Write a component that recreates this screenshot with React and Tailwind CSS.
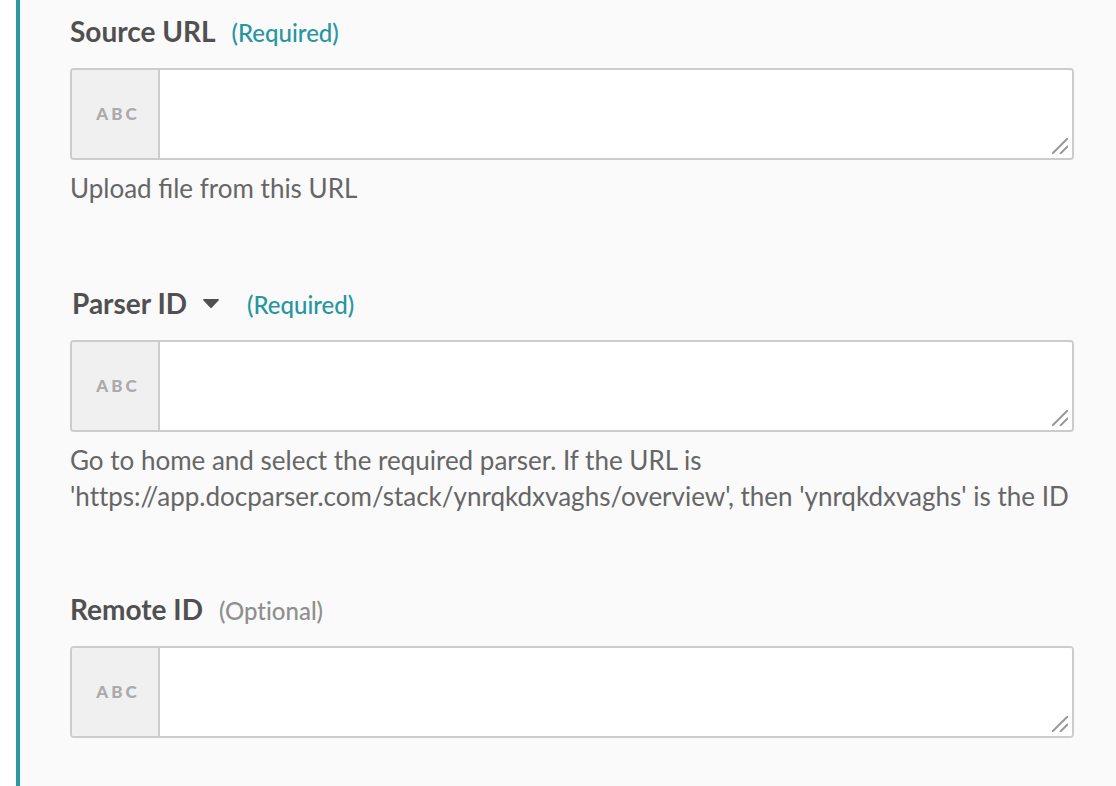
import React from "react";

function Grip() {
  return (
    <svg className="pointer-events-none absolute right-1 bottom-1 size-4" viewBox="0 0 16 16" fill="none" stroke="#999999" strokeWidth="2" aria-hidden="true">
      <path d="M0 16 16 0M8 16l8-8" />
    </svg>
  );
}

function Field({ id, heading, note, required, help }) {
  return (
    <section>
      <div className="flex items-baseline gap-4">
        {heading}
        <span className={required ? "text-2xl leading-9 font-medium text-[#26969f] [font-variant-ligatures:none]" : "text-2xl leading-9 font-medium text-[#8f8f8f] [font-variant-ligatures:none]"}>{note}</span>
      </div>
      <div className="relative mt-[17px] flex h-[92px] overflow-hidden rounded-sm border-2 border-[#cccccc] bg-white">
        <span className="flex w-[88px] shrink-0 items-center justify-center border-r-2 border-[#cccccc] bg-[#f0f0f0] pl-1.5 text-[17px] font-black tracking-[3px] text-[#aaaaaa]">ABC</span>
        <textarea id={id} className="min-w-0 flex-1 resize-none bg-white p-4 text-2xl text-[#505050] outline-none" />
        <Grip />
      </div>
      {help && <p className="mt-[10px] text-[26px] leading-9 text-[#666666]">{help}</p>}
    </section>
  );
}

function Label({ id, children }) {
  return <label htmlFor={id} className="text-[28px] leading-9 font-bold text-[#505050]">{children}</label>;
}

export default function App() {
  return (
    <div className="min-h-screen bg-white pl-4 font-['Lato',sans-serif]">
      <main className="flex min-h-screen flex-col gap-[77px] border-l-4 border-[#2b98a3] bg-[#fafafa] pt-[13px] pr-[42px] pb-12 pl-[50px]">
        <Field id="source-url" heading={<Label id="source-url">Source URL</Label>} note="(Required)" required help="Upload file from this URL" />
        <Field
          id="parser-id"
          heading={
            <div className="flex items-center gap-4 pt-0.5 pl-0.5">
              <Label id="parser-id">Parser ID</Label>
              <button type="button" aria-label="Parser ID options" className="mr-3">
                <svg className="h-[9px] w-4" viewBox="0 0 16 9" fill="#505050"><path d="M1 0h14q1 0 1 1L9 8.500q-1 1-2 0L0 1q0-1 1-1z" /></svg>
              </button>
            </div>
          }
          note="(Required)"
          required
          help={
            <>
              Go to home and select the required parser. If the URL is{" "}
              <span className="[font-variant-ligatures:none]">'https://app.docparser.com/stack/ynrqkdxvaghs/overview', then 'ynrqkdxvaghs' is the ID</span>
            </>
          }
        />
        <Field id="remote-id" heading={<Label id="remote-id">Remote ID</Label>} note="(Optional)" />
      </main>
    </div>
  );
}
